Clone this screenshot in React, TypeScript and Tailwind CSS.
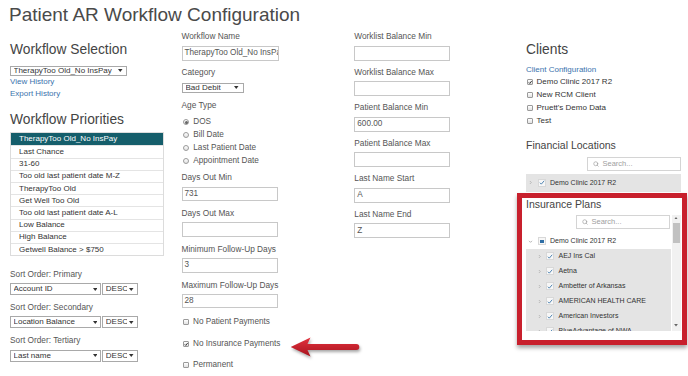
import { Search } from "lucide-react";

const priorities = [
  "TherapyToo Old_No InsPay",
  "Last Chance",
  "31-60",
  "Too old last patient date M-Z",
  "TherapyToo Old",
  "Get Well Too Old",
  "Too old last patient date A-L",
  "Low Balance",
  "High Balance",
  "Getwell Balance > $750",
];

const plans = [
  "AEJ Ins Cal",
  "Aetna",
  "Ambetter of Arkansas",
  "AMERICAN HEALTH CARE",
  "American Investors",
  "BlueAdvantage of NWA",
];

function DropArrow() {
  return (
    <svg viewBox="0 0 6 4" className="h-[3px] w-[4.5px] shrink-0">
      <path d="M0 0H6L3 4Z" fill="#333" />
    </svg>
  );
}

function Select({ value, className = "" }: { value: string; className?: string }) {
  return (
    <div
      className={`flex items-center justify-between gap-[2px] border border-[#a9a9a9] bg-white pl-[2.5px] pr-[3px] text-[8px] text-[#333] ${className}`}
    >
      <span className="overflow-hidden whitespace-nowrap">{value}</span>
      <DropArrow />
    </div>
  );
}

function TextBox({ value = "", className = "" }: { value?: string; className?: string }) {
  return (
    <div
      className={`flex items-center overflow-hidden whitespace-nowrap border border-[#c8c8c8] bg-white px-[2px] text-[8.2px] text-[#555] ${className}`}
    >
      {value}
    </div>
  );
}

function CheckBox({ checked = false }: { checked?: boolean }) {
  return (
    <span className="relative inline-block h-[6.5px] w-[6.5px] shrink-0 rounded-[1px] border border-[#9a9a9a] bg-linear-to-b from-white to-[#e2e2e2]">
      {checked && (
        <svg viewBox="0 0 8 8" className="absolute inset-0 h-full w-full">
          <path d="M1.4 4.2 L3.2 6.1 L6.7 1.6" stroke="#222" strokeWidth="1.5" fill="none" />
        </svg>
      )}
    </span>
  );
}

function Radio({ checked = false }: { checked?: boolean }) {
  return (
    <span className="flex h-[6px] w-[6px] shrink-0 items-center justify-center rounded-full border border-[#9a9a9a] bg-linear-to-b from-white to-[#e2e2e2]">
      {checked && <span className="h-[2.5px] w-[2.5px] rounded-full bg-[#666]" />}
    </span>
  );
}

function Caret({ open = false }: { open?: boolean }) {
  return (
    <svg viewBox="0 0 6 6" className="h-[5px] w-[5px]">
      {open ? (
        <path d="M1.2 2.2 L3 4 L4.8 2.2" stroke="#999" strokeWidth="0.9" fill="none" />
      ) : (
        <path d="M2.2 1.2 L4 3 L2.2 4.8" stroke="#aaa" strokeWidth="0.9" fill="none" />
      )}
    </svg>
  );
}

function TreeRow({
  label,
  level = 0,
  partial = false,
  open = false,
  className = "",
}: {
  label: string;
  level?: number;
  partial?: boolean;
  open?: boolean;
  className?: string;
}) {
  return (
    <div
      className={`flex items-center text-[7px] text-[#333] ${level ? "pl-[10.5px]" : "pl-[2px]"} ${className}`}
    >
      <span className="flex w-[6px] justify-center">
        <Caret open={open} />
      </span>
      <span className="ml-[4px] flex h-[8px] w-[8px] shrink-0 items-center justify-center border border-[#d8d8d8] bg-[#f7f7f7]">
        {partial ? (
          <span className="h-[3.5px] w-[3.5px] bg-[#2f6ea5]" />
        ) : (
          <svg viewBox="0 0 8 8" className="h-[7px] w-[7px]">
            <path d="M1.2 4.3 L3.1 6.2 L6.9 1.7" stroke="#2f6ea5" strokeWidth="1.1" fill="none" />
          </svg>
        )}
      </span>
      <span className="ml-[4px] whitespace-nowrap">{label}</span>
    </div>
  );
}

function SearchBox({ className = "" }: { className?: string }) {
  return (
    <div
      className={`flex h-[14px] w-[93.5px] items-center gap-[3px] border border-[#d4d4d4] bg-white pl-[5px] text-[7.5px] text-[#a0a0a0] ${className}`}
    >
      <Search size={6} strokeWidth={2.5} color="#999" />
      <span>Search...</span>
    </div>
  );
}

function Label({ children, className = "" }: { children: string; className?: string }) {
  return <div className={`text-[8.3px] leading-[11px] text-[#555] ${className}`}>{children}</div>;
}

export default function App() {
  return (
    <div className="relative h-[376px] w-[688px] overflow-hidden bg-white font-['Liberation_Sans',Arial,sans-serif] text-[#333]">
      <h1 className="pl-[9px] pt-[4px] text-[19px] leading-[22px] text-[#4a4a4a]">
        Patient AR Workflow Configuration
      </h1>

      <div className="grid grid-cols-[171.5px_172.8px_171.7px_155px] pl-[10px]">
        {/* Left: selection & priorities */}
        <div className="pt-[16px]">
          <h2 className="text-[13.8px] leading-[16px] text-[#444]">Workflow Selection</h2>
          <Select value="TherapyToo Old_No InsPay" className="mt-[7.7px] h-[10px] w-[116.7px]" />
          <div className="mt-[0.8px] text-[8px] leading-[11.5px] text-[#3b73ad]">
            <div>View History</div>
            <div>Export History</div>
          </div>

          <h2 className="mt-[13px] text-[13.8px] leading-[16px] text-[#444]">Workflow Priorities</h2>
          <div className="mt-[3.8px] w-[154.3px] border border-[#dcdcdc]">
            {priorities.map((p, i) => (
              <div
                key={p}
                className={`flex h-[12.2px] items-center pl-[8px] text-[8px] ${
                  i === 0 ? "bg-[#155e6b] text-white" : "border-t border-[#e4e4e4] text-[#333]"
                }`}
              >
                {p}
              </div>
            ))}
          </div>

          <Label className="mt-[12.5px] text-[#333]">Sort Order: Primary</Label>
          <div className="mt-[3.5px] flex gap-[1.3px]">
            <Select value="Account ID" className="h-[12px] w-[91px]" />
            <Select value="DESC" className="h-[12px] w-[35.4px]" />
          </div>
          <Label className="mt-[7px] text-[#333]">Sort Order: Secondary</Label>
          <div className="mt-[3.2px] flex gap-[1.3px]">
            <Select value="Location Balance" className="h-[12px] w-[91px]" />
            <Select value="DESC" className="h-[12px] w-[35.4px]" />
          </div>
          <Label className="mt-[7px] text-[#333]">Sort Order: Tertiary</Label>
          <div className="mt-[3.2px] flex gap-[1.3px]">
            <Select value="Last name" className="h-[12px] w-[91px]" />
            <Select value="DESC" className="h-[12px] w-[35.4px]" />
          </div>
        </div>

        {/* Middle: workflow settings */}
        <div className="pt-[5px]">
          <Label>Workflow Name</Label>
          <TextBox value="TherapyToo Old_No InsPay" className="mt-[4px] h-[14.7px] w-[97px]" />
          <Label className="mt-[6.3px]">Category</Label>
          <Select value="Bad Debit" className="mt-[4.7px] h-[10.6px] w-[62.3px] pl-[3px] pr-[4px]" />
          <Label className="mt-[7.2px]">Age Type</Label>
          <div className="mt-[4.5px] text-[8.2px] text-[#555]">
            {["DOS", "Bill Date", "Last Patient Date", "Appointment Date"].map((t, i) => (
              <div key={t} className="flex h-[13px] items-center gap-[4px] pl-[1.8px]">
                <Radio checked={i === 0} />
                <span>{t}</span>
              </div>
            ))}
          </div>
          {[
            ["Days Out Min", "731"],
            ["Days Out Max", ""],
            ["Minimum Follow-Up Days", "3"],
            ["Maximum Follow-Up Days", "28"],
          ].map(([l, v], i) => (
            <div key={l} className={i === 0 ? "mt-[4.5px]" : "mt-[7px]"}>
              <Label>{l}</Label>
              <TextBox value={v} className="mt-[3.2px] h-[14.5px] w-[96.6px]" />
            </div>
          ))}
          <div className="mt-[7.5px] flex h-[13px] items-center gap-[4px] pl-[1px] text-[8.2px] text-[#555]">
            <CheckBox />
            <span>No Patient Payments</span>
          </div>
          <div className="mt-[9px] flex h-[13px] items-center gap-[4px] pl-[1px] text-[8.2px] text-[#555]">
            <CheckBox checked />
            <span>No Insurance Payments</span>
          </div>
          <div className="mt-[8px] flex h-[13px] items-center gap-[4px] pl-[1px] text-[8.2px] text-[#555]">
            <CheckBox />
            <span>Permanent</span>
          </div>
        </div>

        {/* Balances */}
        <div className="pt-[5px]">
          {[
            ["Worklist Balance Min", ""],
            ["Worklist Balance Max", ""],
            ["Patient Balance Min", "600.00"],
            ["Patient Balance Max", ""],
            ["Last Name Start", "A"],
            ["Last Name End", "Z"],
          ].map(([l, v], i) => (
            <div key={l} className={i === 0 ? "" : "mt-[6.1px]"}>
              <Label>{l}</Label>
              <TextBox value={v} className="mt-[3.5px] h-[15px] w-[95.7px]" />
            </div>
          ))}
        </div>

        {/* Right: clients & locations */}
        <div className="pt-[16px]">
          <h2 className="text-[13.8px] leading-[16px] text-[#444]">Clients</h2>
          <div className="mt-[6.3px] text-[8px] leading-[11px] text-[#3b73ad]">Client Configuration</div>
          <div className="text-[8px] text-[#333]">
            {["Demo Clinic 2017 R2", "New RCM Client", "Pruett's Demo Data", "Test"].map((c, i) => (
              <div key={c} className="flex h-[13.1px] items-center gap-[3px] pl-[1px]">
                <CheckBox checked={i === 0} />
                <span>{c}</span>
              </div>
            ))}
          </div>

          <h3 className="mt-[11.2px] text-[10.5px] leading-[13px] text-[#444]">Financial Locations</h3>
          <SearchBox className="ml-auto mt-[4.8px]" />
          <TreeRow label="Demo Clinic 2017 R2" className="mt-[3.3px] h-[17.7px] bg-[#e4e4e4]" />

          <div className="-ml-[9px] -mr-[6px] mt-[1px] border-[5px] border-[#c8202d] bg-white pl-[4px] pr-[1px] pb-[9px] shadow-[0_3px_4px_rgba(0,0,0,0.35)]">
            <h3 className="text-[10.5px] leading-[12px] text-[#444]">Insurance Plans</h3>
            <div className="flex items-start">
              <div className="flex-1">
                <SearchBox className="ml-auto mr-[2px] mt-[5.3px]" />
                <div className="mt-[5px] h-[97px] overflow-hidden pr-[1px]">
                  <TreeRow label="Demo Clinic 2017 R2" open partial className="h-[15px]" />
                  <div className="bg-[#e4e4e4]">
                    {plans.map((p) => (
                      <TreeRow key={p} label={p} level={1} className="h-[15px]" />
                    ))}
                  </div>
                </div>
              </div>
              <div className="relative mt-[5.3px] h-[116px] w-[9px] bg-[#f1f1f1]">
                <svg viewBox="0 0 6 4" className="absolute left-[2.5px] top-[2px] h-[2.5px] w-[4px]">
                  <path d="M0 4H6L3 0Z" fill="#666" />
                </svg>
                <div className="absolute left-[1px] top-[8px] h-[20px] w-[7px] bg-[#c1c1c1]" />
                <svg viewBox="0 0 6 4" className="absolute bottom-[4px] left-[2.5px] h-[2.5px] w-[4px]">
                  <path d="M0 0H6L3 4Z" fill="#666" />
                </svg>
              </div>
            </div>
          </div>
        </div>
      </div>

      {/* annotation arrow */}
      <svg
        viewBox="0 0 80 30"
        className="absolute left-[285px] top-[333px] h-[30px] w-[80px] drop-shadow-[1px_2px_1.5px_rgba(0,0,0,0.35)]"
      >
        <defs>
          <linearGradient id="arrowFill" x1="0" y1="0" x2="0" y2="1">
            <stop offset="0" stopColor="#e3323d" />
            <stop offset="1" stopColor="#a8141f" />
          </linearGradient>
        </defs>
        <path
          d="M5.7 14 L25.5 4.5 L22.5 11 L71.3 11 Q74.3 11 74.3 14 Q74.3 17 71.3 17 L22.5 17 L25.5 23.5 Z"
          fill="url(#arrowFill)"
        />
      </svg>
    </div>
  );
}
